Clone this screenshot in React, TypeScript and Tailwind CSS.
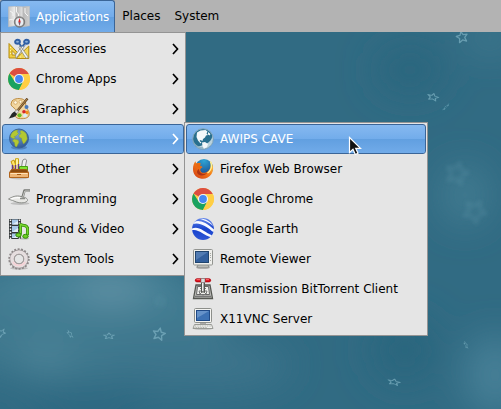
import React from 'react';

type IconProps = { children: React.ReactNode };

function Icon({ children }: IconProps) {
  return (
    <svg viewBox="0 0 22 22" className="size-[22px] shrink-0" aria-hidden="true">
      {children}
    </svg>
  );
}

function MapIcon() {
  return (
    <Icon>
      <defs>
        <linearGradient id="mapFold" x1="0" y1="0" x2="1" y2="0">
          <stop offset="0" stopColor="#c6c6c6" />
          <stop offset="0.3" stopColor="#ececec" />
          <stop offset="0.36" stopColor="#b4b4b4" />
          <stop offset="0.64" stopColor="#dedede" />
          <stop offset="0.7" stopColor="#b8b8b8" />
          <stop offset="1" stopColor="#cfcfcf" />
        </linearGradient>
      </defs>
      <path d="M0.500 0.800 7 0.300 14.500 0.800 21.500 0.300v19.500l-7 1-7.500-1-6.500 1z" fill="url(#mapFold)" stroke="#bdbdbd" strokeWidth=".6" />
      <path d="M8.500 1v5l2 2v2M1 14c3-1 4-1 6 1M17 2v5l3 3M2 5l3 2v3" fill="none" stroke="#f4f4f4" strokeWidth="1" />
      <circle cx="11.500" cy="16" r="5.200" fill="#8f8f8f" stroke="#6c6c6c" strokeWidth=".8" />
      <circle cx="11.500" cy="16" r="3.900" fill="#e9eef2" />
      <path d="M11.500 12 12.700 16h-2.400z" fill="#d22" />
      <path d="M11.500 20 12.700 16h-2.400z" fill="#8a5060" />
    </Icon>
  );
}

function AccessoriesIcon() {
  return (
    <Icon>
      <path d="M1 5.500v14.500h13.500z M4 12.500v4.500h4.500z" fill="#f0cf45" fillRule="evenodd" stroke="#b78d0c" strokeWidth="1" />
      <path d="M8 20.500 20.800 8v12.500z" fill="#f0d557" stroke="#b78d0c" />
      <path d="M2.500 9v1M2.500 12v1M2.500 15v1M12 19h1M16 19h1" stroke="#fff4a8" />
      <path d="M12 7.500 20.500 19.500l-2.500.8L11 9.500zM17 7.500 8.200 20.500l-.7-3.500L15.500 6z" fill="#f4f4f2" stroke="#878a85" strokeWidth=".8" />
      <ellipse cx="9.500" cy="3.800" rx="2.400" ry="2" fill="#8fb0d8" stroke="#2f5fa5" strokeWidth="1.900" />
      <ellipse cx="18.500" cy="3.800" rx="2.400" ry="2" fill="#8fb0d8" stroke="#2f5fa5" strokeWidth="1.900" />
      <path d="M11.500 6l2 2.500M16.500 6l-2 2.500" stroke="#2f5fa5" strokeWidth="1.800" />
    </Icon>
  );
}

function ChromeIcon() {
  return (
    <Icon>
      <circle cx="11" cy="11" r="11" fill="#ffd04b" />
      <path d="M11 11 1.474 5.500A11 11 0 0 1 20.526 5.500V6H11z" fill="#dc4e41" />
      <path d="M1.474 5.500A11 11 0 0 0 11 22l4.330-8.500L6.670 13.500z" fill="#1aa260" />
      <path d="M11 6H20.780A11 11 0 0 1 11 22L15.330 13.500z" fill="#ffce44" />
      <circle cx="11" cy="11" r="5.100" fill="#f4f4f4" />
      <circle cx="11" cy="11" r="3.900" fill="#4587f3" />
    </Icon>
  );
}

function GraphicsIcon() {
  return (
    <Icon>
      <path d="M4 3C7 0 12 0 15.500 1.500c3 1.500 1.500 5 3 8 1.500 3 3.500 4.500 2.500 8-1 3-6 3.500-10 3C6.500 20 6 16 8 13c1-2-5-4-5-7z" fill="#f2d6a0" stroke="#b88232" strokeWidth=".9" />
      <circle cx="7.500" cy="4.500" r="1.800" fill="#fff6df" stroke="#c99b56" strokeWidth=".7" />
      <circle cx="12.500" cy="3.800" r="1.500" fill="#fff6df" stroke="#c99b56" strokeWidth=".7" />
      <circle cx="18.500" cy="9" r="2" fill="#4779bd" />
      <circle cx="19" cy="14.500" r="1.700" fill="#f28b19" />
      <circle cx="16" cy="13.800" r="1.800" fill="#d82727" />
      <circle cx="11.500" cy="17.300" r="2.100" fill="#68bd1c" />
      <circle cx="17" cy="17.500" r="1.900" fill="#d9edfa" />
      <path d="M19.500.5 8 14.500" stroke="#674925" strokeWidth="2.400" />
      <path d="M19 1 9 13" stroke="#c89a59" strokeWidth=".8" />
      <path d="M9 11.500l2 2-3 2.800-2-1.800z" fill="#ddd" stroke="#777" strokeWidth=".6" />
      <path d="M6.500 13.500 9 16c-1 3-4.500 3.500-8.500 4.500C3 18.500 3 15 6.500 13.500z" fill="#242728" />
    </Icon>
  );
}

function GlobeIcon() {
  return (
    <Icon>
      <defs>
        <radialGradient id="earthSea" cx=".4" cy=".3" r=".8">
          <stop offset="0" stopColor="#769fd4" />
          <stop offset="1" stopColor="#2a538d" />
        </radialGradient>
      </defs>
      <ellipse cx="11" cy="19.500" rx="8" ry="2" fill="#376096" opacity=".5" />
      <circle cx="11" cy="10.500" r="9.500" fill="url(#earthSea)" stroke="#38619a" />
      <path d="M3 6.500C5 3 7 2 10 2l-1 2 1.500 1.500L8 8 6 8.500 7.500 10 5 10.500 2.500 9zM6 11l4 1 1 2-2.500 5-1.500-1-.5-3.500L4.500 13zM13 2.500c3 .5 4.500 2 5.500 4l.8 4.500-1.800 3-2 2-1.500-3.500-.5-2.500-2-.5-.5-2 2-2-1-1.500z" fill="#b4c832" stroke="#87a728" strokeWidth=".4" />
    </Icon>
  );
}

function OtherIcon() {
  return (
    <Icon>
      <ellipse cx="11" cy="20" rx="9" ry="1.500" fill="#777" opacity=".35" />
      <path d="M3 3.500 6 2l3 9H6z" fill="#ffe66b" stroke="#c5970b" />
      <path d="M7.500.7h3v11h-3z" fill="#fff3a1" stroke="#c9a512" />
      <path d="M13.500 9 14.500 3c.5-2.500 4.500-2.500 4 0L17 10" fill="#eee" stroke="#888" />
      <path d="M4.500 7v5M10.500 6v6M7.500 7v5" stroke="#683b84" strokeWidth="1.500" />
      <path d="M11.500 8.500h8v4h-8z" fill="#82e333" stroke="#4a9e14" />
      <path d="M3.500 11.500h15l2 3H1.500z" fill="#8a4b10" stroke="#a45b16" />
      <path d="M1.500 14.500h19v5h-19z" fill="#edb576" stroke="#b2651c" />
      <path d="M2.500 15.500h17" stroke="#ffe2b8" />
      <path d="M9 16.500h4" stroke="#a45b16" />
    </Icon>
  );
}

function ProgrammingIcon() {
  return (
    <Icon>
      <ellipse cx="12" cy="15.500" rx="9.500" ry="1.500" fill="#777" opacity=".35" />
      <path d="M.5 11C4 9 8 7 13 8.500c4 .7 7 2 6.500 4-1 2.500-7 3-11 1.500C6 13 3 12 .5 11z" fill="#e8e8e5" stroke="#8a8c88" />
      <path d="M2.500 11C7 9 11 9 17 10.500" fill="none" stroke="#fff" strokeWidth="1.200" />
      <path d="M14.500 9.500 16.500 2.500h5.500" fill="none" stroke="#777975" strokeWidth="2.600" strokeLinejoin="round" />
      <path d="M14.800 9 16.800 3h5" fill="none" stroke="#d2d3d0" strokeWidth=".9" />
      <path d="M12 10.500h5" stroke="#8a8c88" strokeWidth="1.500" />
    </Icon>
  );
}

function MediaIcon() {
  return (
    <Icon>
      <path d="M1 1h12v20H1z" fill="#333739" />
      <path d="M4 1.500h6v5H4zM4 8h6v6H4zM4 15.500h6V20H4z" fill="#a8c9e9" />
      <path d="M4 6.500 10 3v3.500zM4 14l6-4v4zM4 20l6-3v3z" fill="#e1edf6" />
      <path d="M2.500 1.500V21M11.500 1.500V21" stroke="#f6f6f6" strokeWidth="1.500" strokeDasharray="1.500 1.500" />
      <ellipse cx="16" cy="20.500" rx="5" ry="1" fill="#777" opacity=".4" />
      <path d="M12.500 5.500v11M19.500 9v8M12.500 6c3 3 5.500 0 7 4" fill="none" stroke="#388d0b" strokeWidth="3" strokeLinejoin="round" />
      <path d="M12.500 6v10.500M12.500 6c3 3 5.500 0 7 4v7" fill="none" stroke="#79d830" strokeWidth="1.500" />
      <ellipse cx="10.500" cy="17" rx="2.700" ry="2" fill="#6ed026" stroke="#338a08" />
      <ellipse cx="17.500" cy="18.300" rx="2.700" ry="2" fill="#6ed026" stroke="#338a08" />
    </Icon>
  );
}

function GearIcon() {
  return (
    <Icon>
      <ellipse cx="11" cy="20.300" rx="9" ry="1.400" fill="#777" opacity=".35" />
      <circle cx="11" cy="11" r="9.500" fill="none" stroke="#8d8788" strokeWidth="2.400" strokeDasharray="1.900 1.416" />
      <circle cx="11" cy="11" r="6.800" fill="none" stroke="#968f90" strokeWidth="5.200" />
      <circle cx="11" cy="11" r="7" fill="none" stroke="#e6dedf" strokeWidth="3.600" />
      <circle cx="11" cy="11" r="4.700" fill="#e5e5e5" stroke="#a09a9a" strokeWidth="1" />
      <path d="M5 14a7 7 0 0 0 12 0" fill="none" stroke="#f6d2d6" strokeWidth="1.500" />
    </Icon>
  );
}

function CaveIcon() {
  return (
    <Icon>
      <defs>
        <clipPath id="caveClip"><circle cx="11" cy="11" r="10" /></clipPath>
      </defs>
      <circle cx="11" cy="11" r="10.300" fill="#286f8e" stroke="#86a6ba" strokeWidth="1" />
      <g clipPath="url(#caveClip)">
        <path d="M20 2c2 8-1 15-17 17l4 4h16V2z" fill="#b9d2dd" />
        <path d="M1 12c2 5 6 8 12 7l-2 3H3z" fill="#8fb2c3" />
        <path d="M5 4.500 8.500 2.500l5-.5 2 1.500-1 2 1.500 1.500-2 .5-1 2-2 1.500-.5 2-2-1-1 1 2 1.500-1 1L6 12.500 4.500 9z" fill="#f4f8fa" />
        <path d="M10 14.500l3-.5 3 2-1 3-3 2-1.500-3z" fill="#f4f8fa" />
        <path d="M16 4l2.500 2-1 1.500L16 6.500z" fill="#f4f8fa" />
      </g>
    </Icon>
  );
}

function FirefoxIcon() {
  return (
    <Icon>
      <defs>
        <linearGradient id="foxTail" x1="0" y1="1" x2="1" y2="0">
          <stop offset="0" stopColor="#cf3a15" />
          <stop offset=".55" stopColor="#f47a16" />
          <stop offset="1" stopColor="#ffe75b" />
        </linearGradient>
        <radialGradient id="foxGlobe" cx=".5" cy=".1" r=".9">
          <stop offset="0" stopColor="#2fa5d5" />
          <stop offset="1" stopColor="#183d86" />
        </radialGradient>
      </defs>
      <circle cx="12" cy="10" r="9" fill="url(#foxGlobe)" />
      <path d="M18.500 3c3 4 3.500 9 1 13-2.500 4-7 5.500-11 4.500C3.500 19.500.8 15.500 1 10.500 1 7.500 2 5.200 3.500 3.200L4 5.500c1.500-.8 3-.7 4.500-.3L8 7.800l2.500 1.200-2.200 2c-.5 3.500 3 4.500 5.700 3.500 3.500-1.500 5.500-4.500 4.500-11.500z" fill="url(#foxTail)" />
      <path d="M3.500 3.200 4.500 6c1.500-1 3-.8 4-.7L8 8l2.500 1-2.500 1.500-3-1z" fill="#e86812" />
      <path d="M7 11c0 4 4 6 8 4-2 3-7 3.500-9.500.5C4.500 14 5 12 7 11z" fill="#ad3414" />
      <path d="M18.500 3.500c2 5 .5 9-3 11.500" fill="none" stroke="#fff39a" strokeWidth="1.300" />
    </Icon>
  );
}

function EarthAppIcon() {
  return (
    <Icon>
      <defs>
        <linearGradient id="earthBlue" x1="0" y1="0" x2="0" y2="1">
          <stop offset="0" stopColor="#6688e9" />
          <stop offset=".5" stopColor="#1742cd" />
          <stop offset="1" stopColor="#2e57d6" />
        </linearGradient>
        <clipPath id="earthClip"><circle cx="11" cy="11" r="11" /></clipPath>
      </defs>
      <circle cx="11" cy="11" r="10.900" fill="url(#earthBlue)" />
      <g clipPath="url(#earthClip)" fill="#f7f9ff">
        <path d="M-1 7C6 3 13 7 22.500 15v-3C14 4 7 1.500 2 4z" />
        <path d="M-1 11c7-4 12 2 22 7l-1.500 1.500C11 17 6 10-1 12.500z" />
        <path d="M7 .8c6-.5 11 2 14.500 7.500-5-4-8.500-6-14.500-7.500z" />
      </g>
    </Icon>
  );
}

function RemoteIcon() {
  return (
    <Icon>
      <ellipse cx="11" cy="19.500" rx="7" ry="1.600" fill="#777" opacity=".5" />
      <path d="M6 17h10l1 2H5z" fill="#edeeec" stroke="#888a85" />
      <rect x="1.500" y="1.500" width="19" height="15.500" rx="1" fill="#efefec" stroke="#929490" />
      <rect x="3.500" y="3.500" width="13" height="11" fill="#325f9d" stroke="#20446e" />
      <path d="M4 4h12L4 12z" fill="#6f98ca" opacity=".5" />
      <path d="M18.500 5v5M18.500 12v2" stroke="#a6a8a3" strokeDasharray="1 1" />
    </Icon>
  );
}

function TransmissionIcon() {
  return (
    <Icon>
      <path d="M4 7h14l2.500 13.500h-19z" fill="#b9b9b5" stroke="#555752" strokeWidth="1.300" />
      <path d="M5.500 8.500h11l1 8h-13z" fill="#f2f2ee" stroke="#666" />
      <path d="M7 13a4 4 0 0 0 8 0M7 13h8M8 10l6 6M14 10l-6 6" fill="none" stroke="#777" />
      <path d="M3 18.500h16" stroke="#777" strokeWidth="1.500" />
      <path d="M9.500 3h3v11h-3z" fill="#aaa" stroke="#555752" />
      <path d="M10.500 4v9" stroke="#eee" />
      <rect x="3.300" y=".7" width="15.400" height="3.200" rx="1.600" fill="#d90b18" stroke="#a9000c" strokeWidth=".7" />
      <path d="M9 .5h4v4H9z" fill="#ddd" stroke="#777" strokeWidth=".6" />
      <path d="M4.500 1.700H8M14 1.700h3" stroke="#ff7474" />
    </Icon>
  );
}

function ServerIcon() {
  return (
    <Icon>
      <ellipse cx="11" cy="20.500" rx="10" ry="1.300" fill="#777" opacity=".4" />
      <rect x="2.500" y=".5" width="17" height="14" rx="1" fill="#f4f4f1" stroke="#8d8f8b" />
      <rect x="4.500" y="2.500" width="13" height="10" fill="#3e72b4" stroke="#204a87" />
      <path d="M5 3h12L5 10z" fill="#8db2de" opacity=".5" />
      <path d="M8 15h6v2H8z" fill="#aaa" />
      <path d="M2.500 16.500h17l1.500 4H1z" fill="#f0f0ed" stroke="#999b96" />
      <path d="M3 18h16M2.500 19.500H15" stroke="#9c9e99" strokeWidth=".8" strokeDasharray="1 .7" />
    </Icon>
  );
}

const submenuItems = [
  { label: 'AWIPS CAVE', icon: <CaveIcon /> },
  { label: 'Firefox Web Browser', icon: <FirefoxIcon /> },
  { label: 'Google Chrome', icon: <ChromeIcon /> },
  { label: 'Google Earth', icon: <EarthAppIcon /> },
  { label: 'Remote Viewer', icon: <RemoteIcon /> },
  { label: 'Transmission BitTorrent Client', icon: <TransmissionIcon /> },
  { label: 'X11VNC Server', icon: <ServerIcon /> },
];

const menuItems = [
  { label: 'Accessories', icon: <AccessoriesIcon /> },
  { label: 'Chrome Apps', icon: <ChromeIcon /> },
  { label: 'Graphics', icon: <GraphicsIcon /> },
  { label: 'Internet', icon: <GlobeIcon />, open: true },
  { label: 'Other', icon: <OtherIcon /> },
  { label: 'Programming', icon: <ProgrammingIcon /> },
  { label: 'Sound & Video', icon: <MediaIcon /> },
  { label: 'System Tools', icon: <GearIcon /> },
];

const highlight =
  'border-[#3a6598] bg-linear-to-b from-[#86b9f0] from-0% via-[#72aceb] via-50% to-[#72aceb] text-white';

function Shine() {
  return <span className="absolute inset-x-0 bottom-0 h-1/2 bg-linear-to-b from-[#619fe0] to-[#71abe9]" />;
}

function MenuRow({ label, icon, active, arrow }: { label: string; icon: React.ReactNode; active?: boolean; arrow?: boolean }) {
  return (
    <button
      type="button"
      role="menuitem"
      className={`relative flex h-[30px] w-full items-center gap-1.5 overflow-hidden rounded-[3px] border pr-1 pl-[5px] text-left ${active ? highlight : 'border-transparent'}`}
    >
      {active && <Shine />}
      <span className="relative flex">{icon}</span>
      <span className="relative grow whitespace-nowrap">{label}</span>
      {arrow && (
        <svg viewBox="0 0 7 12" className="relative h-3 w-[7px]" aria-hidden="true">
          <path d="M1 1 5.500 6 1 11" fill="none" stroke="currentColor" strokeWidth="1.700" />
        </svg>
      )}
    </button>
  );
}

function Star({ x, y, sx = 1, sy = 1, turn = 0 }: { x: number; y: number; sx?: number; sy?: number; turn?: number }) {
  return (
    <path
      d="M0-5.500 1.600-2 5.500-1.700 2.600 1 3.600 5 0 3-3.600 5-2.600 1-5.500-1.700-1.600-2z"
      transform={`translate(${x} ${y}) rotate(${turn}) scale(${sx} ${sy})`}
      fill="none"
      stroke="#79aebf"
      strokeWidth="1.300"
      strokeLinejoin="round"
      opacity=".75"
    />
  );
}

function Wallpaper() {
  return (
    <svg className="absolute inset-0 size-full" viewBox="0 0 501 409" preserveAspectRatio="xMidYMid slice" aria-hidden="true">
      <defs>
        <filter id="haze" x="-100%" y="-100%" width="300%" height="300%"><feGaussianBlur stdDeviation="18" /></filter>
        <filter id="faint"><feGaussianBlur stdDeviation="2" /></filter>
      </defs>
      <rect width="501" height="409" fill="#316b83" />
      <g filter="url(#haze)">
        <ellipse cx="80" cy="320" rx="150" ry="60" fill="#40798f" />
        <ellipse cx="90" cy="285" rx="100" ry="24" fill="#4a849a" />
        <ellipse cx="112" cy="288" rx="36" ry="16" fill="#6293a6" />
        <ellipse cx="45" cy="357" rx="24" ry="12" fill="#52899d" />
        <ellipse cx="200" cy="365" rx="90" ry="24" fill="#3c758c" />
        <ellipse cx="90" cy="409" rx="60" ry="14" fill="#2c6680" />
        <ellipse cx="495" cy="375" rx="30" ry="40" fill="#478097" />
        <ellipse cx="465" cy="195" rx="24" ry="30" fill="#437b91" />
        <ellipse cx="490" cy="38" rx="24" ry="14" fill="#427a90" />
        <ellipse cx="410" cy="70" rx="35" ry="25" fill="#2b667e" />
        <ellipse cx="405" cy="350" rx="35" ry="35" fill="#2b667e" />
      </g>
      <g filter="url(#faint)" opacity=".3">
        <Star x={457} y={173} sx={2} sy={2} turn={15} />
        <Star x={475} y={211} sx={2} sy={2} turn={30} />
        <Star x={160} y={301} />
      </g>
      <Star x={462} y={37} turn={-12} />
      <Star x={433} y={97} sy={0.65} turn={15} />
      <Star x={446} y={107} sx={0.8} sy={0.18} turn={-45} />
      <Star x={1} y={333} sx={0.9} sy={0.6} turn={-40} />
      <Star x={70} y={334} sx={0.8} sy={0.35} turn={55} />
      <Star x={109} y={336} sy={0.55} />
      <Star x={159} y={334} sx={1.1} sy={1.1} turn={12} />
      <Star x={394} y={382} sx={1.1} sy={0.55} turn={12} />
      <Star x={466} y={345} sx={0.7} sy={0.25} turn={65} />
    </svg>
  );
}

export default function App() {
  return (
    <div className="relative min-h-screen overflow-hidden font-['DejaVu_Sans',sans-serif] text-xs text-black">
      <Wallpaper />
      <nav className="relative flex h-8 bg-[#b3b3b3]" aria-label="Desktop">
        <button
          type="button"
          aria-expanded="true"
          className={`relative flex items-center gap-1.5 overflow-hidden rounded-t-[3px] border border-b-0 pr-[5px] pl-[7px] ${highlight}`}
        >
          <Shine />
          <span className="relative flex"><MapIcon /></span>
          <span className="relative">Applications</span>
        </button>
        <button type="button" className="px-[7px]">Places</button>
        <button type="button" className="px-[7px]">System</button>

        <ul role="menu" className="absolute top-full left-0 w-[186px] border border-[#949494] bg-[#e5e5e5] p-px">
          {menuItems.map((item) => (
            <li key={item.label} role="none" className="relative">
              <MenuRow label={item.label} icon={item.icon} active={item.open} arrow />
              {item.open && (
                <ul role="menu" className="absolute -top-0.5 left-full z-10 w-[244px] border border-[#949494] bg-[#e5e5e5] p-px">
                  {submenuItems.map((entry, i) => (
                    <li key={entry.label} role="none" className="relative">
                      <MenuRow label={entry.label} icon={entry.icon} active={i === 0} />
                      {i === 0 && (
                        <svg viewBox="0 0 14 20" className="absolute top-3 left-[162px] h-5 w-3.5" aria-hidden="true">
                          <path d="M1.500 1.500v15l3.500-3.300 2.300 5.300 2.700-1.200-2.300-5h4.800z" fill="#111" stroke="#fff" strokeWidth="1.200" />
                        </svg>
                      )}
                    </li>
                  ))}
                </ul>
              )}
            </li>
          ))}
        </ul>
      </nav>
    </div>
  );
}
